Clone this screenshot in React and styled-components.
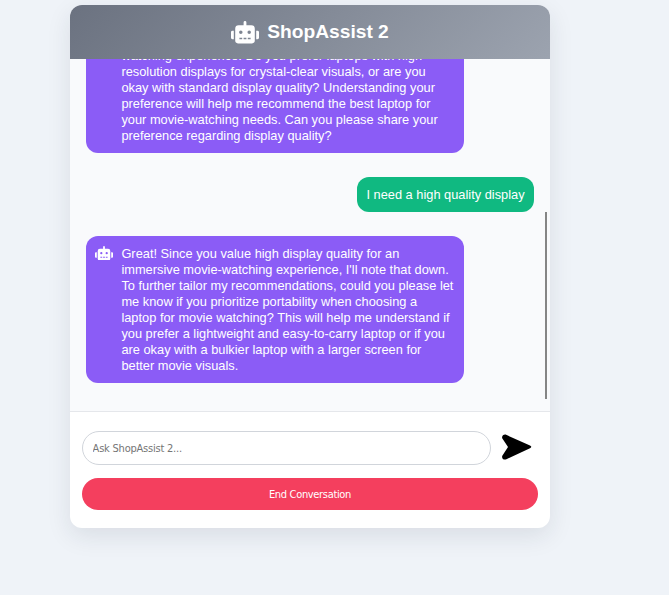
import React from "react";
import styled, { createGlobalStyle } from "styled-components";
import { FaRobot } from "react-icons/fa";

const GlobalStyle = createGlobalStyle`
  * { box-sizing: border-box; }
  body {
    margin: 0;
    background: #eff3f8;
    font-family: "Liberation Sans", Arial, sans-serif;
  }
`;

const Page = styled.main`
  height: 595px;
  padding: 5px 0 0 70px;
  overflow: hidden;
`;

const ChatCard = styled.section`
  display: flex;
  flex-direction: column;
  width: 480px;
  height: 523px;
  border-radius: 12px;
  overflow: hidden;
  background: #fff;
  box-shadow: 0 8px 24px rgba(30, 41, 59, 0.1);
`;

const Header = styled.header`
  display: flex;
  flex: none;
  align-items: center;
  justify-content: center;
  gap: 8px;
  height: 54px;
  color: #fff;
  background: linear-gradient(135deg, #6b7280, #9ca3af);
`;

const HeaderIcon = styled(FaRobot)`
  width: 28px;
  height: 22.4px;
  margin-top: 1px;
`;

const Title = styled.h1`
  margin: 0 0 1px;
  font-size: 19.2px;
  line-height: 24px;
  font-weight: 700;
`;

const ChatArea = styled.div`
  display: flex;
  flex: none;
  height: 352px;
  background: #f9fafc;
`;

const Messages = styled.div`
  display: flex;
  flex: 1;
  flex-direction: column;
  justify-content: flex-end;
  gap: 24px;
  min-width: 0;
  overflow: hidden;
  padding: 0 11px 28px 16px;
`;

const ScrollTrack = styled.div`
  width: 5px;
  padding-top: 153px;
`;

const ScrollThumb = styled.div`
  width: 2px;
  height: 187px;
  background: #858585;
`;

const Bubble = styled.article`
  display: flex;
  flex: none;
  align-self: ${(p) => (p.$user ? "flex-end" : "flex-start")};
  gap: 8px;
  width: ${(p) => (p.$user ? "177px" : "378px")};
  padding: 10px 9px 9px 9.4px;
  border-radius: 12px;
  color: #fff;
  background: ${(p) => (p.$user ? "#10b981" : "#8b5cf6")};
`;

const ContinuedBubble = styled(Bubble)`
  padding-left: 35.4px;
`;

const BotIcon = styled(FaRobot)`
  flex: none;
  width: 18px;
  height: 14.4px;
`;

const BubbleText = styled.p`
  margin: 0;
  font-size: 12.8px;
  line-height: 16px;
  letter-spacing: 0.01px;
`;

const Line = styled.span`
  display: block;
  white-space: nowrap;
`;

const Footer = styled.footer`
  display: flex;
  flex: 1;
  flex-direction: column;
  gap: 13px;
  padding: 19px 12px 0;
  border-top: 1px solid #e5e7eb;
`;

const InputRow = styled.div`
  display: flex;
  align-items: center;
  gap: 10px;
`;

const Input = styled.input`
  width: 409px;
  height: 34px;
  padding: 1px 10px 0 9.6px;
  border: 1px solid #d1d5db;
  border-radius: 17px;
  outline: none;
  background: #fff;
  font: 11px "DejaVu Sans Condensed", "DejaVu Sans", sans-serif;
  font-stretch: condensed;
  letter-spacing: -0.22px;
  &::placeholder { color: #757575; opacity: 1; }
`;

const SendButton = styled.button`
  display: flex;
  width: 32px;
  height: 32px;
  padding: 0;
  border: 0;
  background: none;
`;

const EndButton = styled.button`
  height: 32px;
  padding: 0;
  border: 0;
  border-radius: 16px;
  color: #fff;
  background: #f43f5e;
  font: 11px "DejaVu Sans Condensed", "DejaVu Sans", sans-serif;
  font-stretch: condensed;
  letter-spacing: -0.33px;
`;

const conversation = [
  {
    continued: true,
    lines: [
      "watching experience. Do you prefer laptops with high-",
      "resolution displays for crystal-clear visuals, or are you",
      "okay with standard display quality? Understanding your",
      "preference will help me recommend the best laptop for",
      "your movie-watching needs. Can you please share your",
      "preference regarding display quality?",
    ],
  },
  { user: true, lines: ["I need a high quality display"] },
  {
    lines: [
      "Great! Since you value high display quality for an",
      "immersive movie-watching experience, I'll note that down.",
      "To further tailor my recommendations, could you please let",
      "me know if you prioritize portability when choosing a",
      "laptop for movie watching? This will help me understand if",
      "you prefer a lightweight and easy-to-carry laptop or if you",
      "are okay with a bulkier laptop with a larger screen for",
      "better movie visuals.",
    ],
  },
];

function Message({ user, continued, lines }) {
  const Shell = continued ? ContinuedBubble : Bubble;
  return (
    <Shell $user={user}>
      {!user && !continued && <BotIcon />}
      <BubbleText>
        {lines.map((line) => <Line key={line}>{line}</Line>)}
      </BubbleText>
    </Shell>
  );
}

export default function App() {
  return (
    <>
      <GlobalStyle />
      <Page>
        <ChatCard>
          <Header>
            <HeaderIcon />
            <Title>ShopAssist 2</Title>
          </Header>
          <ChatArea>
            <Messages>
              {conversation.map((m) => <Message key={m.lines[0]} {...m} />)}
            </Messages>
            <ScrollTrack><ScrollThumb /></ScrollTrack>
          </ChatArea>
          <Footer>
            <InputRow>
              <Input placeholder="Ask ShopAssist 2..." />
              <SendButton aria-label="Send">
                <svg width="32" height="32" viewBox="0 0 32 32">
                  <path d="M1.2 6.2 C.6 4.2 2.4 2.3 4.6 2.6 L29 13.4 Q31.6 14.8 29 16.2 L5.4 27.3 C2.6 28.3 .4 26.2 1.3 23.8 L7 15 Z" fill="#000" />
                </svg>
              </SendButton>
            </InputRow>
            <EndButton>End Conversation</EndButton>
          </Footer>
        </ChatCard>
      </Page>
    </>
  );
}
